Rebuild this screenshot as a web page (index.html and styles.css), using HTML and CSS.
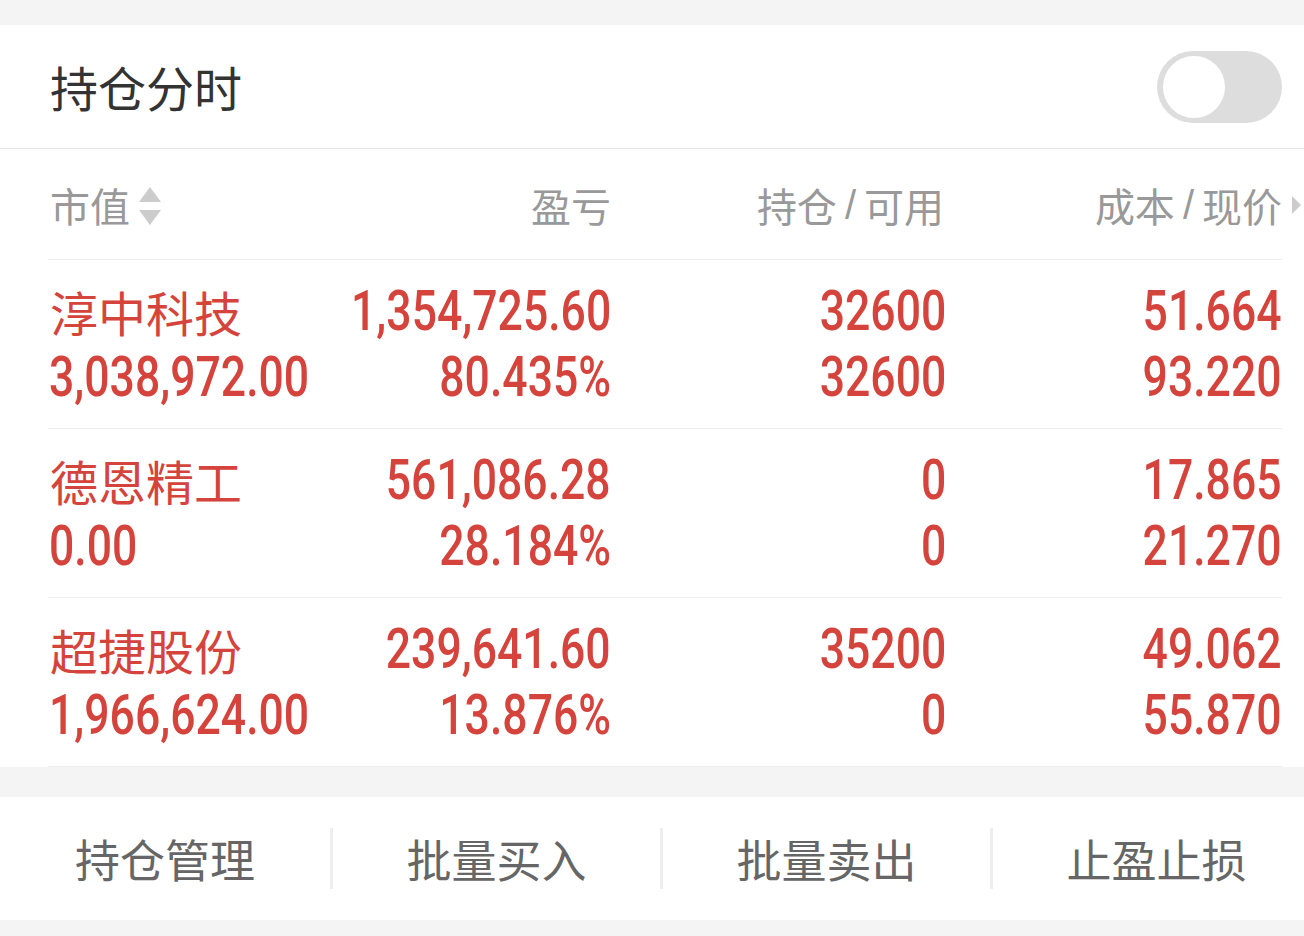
FILE: index.html
```html
<!DOCTYPE html>
<html lang="zh-CN">
<head>
<meta charset="utf-8">
<title>持仓分时</title>
<link rel="stylesheet" href="styles.css">
</head>
<body>
<div class="top-gap"></div>
<section class="panel">
  <div class="panel-head">
    <h1 class="title">持仓分时</h1>
    <div class="toggle"><div class="knob"></div></div>
  </div>
  <div class="table">
    <div class="row head">
      <div class="cell c1">市值
        <svg class="sort" width="22" height="38" viewBox="0 0 22 38"><polygon points="11,0 22,15 0,15" fill="#cccccc"/><polygon points="0,23 22,23 11,38" fill="#cccccc"/></svg>
      </div>
      <div class="cell c2">盈亏</div>
      <div class="cell c3">持仓<span class="sl">/</span>可用</div>
      <div class="cell c4">成本<span class="sl">/</span>现价
        <svg class="more" width="9" height="18" viewBox="0 0 9 18"><polygon points="0,0 9,9 0,18" fill="#cccccc"/></svg>
      </div>
    </div>
    <div class="row data">
      <div class="cell c1"><span class="name">淳中科技</span><span class="num">3,038,972.00</span></div>
      <div class="cell c2"><span class="num">1,354,725.60</span><span class="num">80.435%</span></div>
      <div class="cell c3"><span class="num">32600</span><span class="num">32600</span></div>
      <div class="cell c4"><span class="num">51.664</span><span class="num">93.220</span></div>
    </div>
    <div class="row data">
      <div class="cell c1"><span class="name">德恩精工</span><span class="num">0.00</span></div>
      <div class="cell c2"><span class="num">561,086.28</span><span class="num">28.184%</span></div>
      <div class="cell c3"><span class="num">0</span><span class="num">0</span></div>
      <div class="cell c4"><span class="num">17.865</span><span class="num">21.270</span></div>
    </div>
    <div class="row data">
      <div class="cell c1"><span class="name">超捷股份</span><span class="num">1,966,624.00</span></div>
      <div class="cell c2"><span class="num">239,641.60</span><span class="num">13.876%</span></div>
      <div class="cell c3"><span class="num">35200</span><span class="num">0</span></div>
      <div class="cell c4"><span class="num">49.062</span><span class="num">55.870</span></div>
    </div>
  </div>
</section>
<nav class="actions">
  <div class="act">持仓管理</div>
  <div class="act">批量买入</div>
  <div class="act">批量卖出</div>
  <div class="act">止盈止损</div>
</nav>
</body>
</html>
```
FILE: styles.css
```css
* { box-sizing: border-box; }
html, body { margin: 0; padding: 0; }
body {
  width: 1304px;
  height: 936px;
  overflow: hidden;
  background: #f4f4f4;
  font-family: "Noto Sans CJK SC", "Noto Sans", sans-serif;
}
.top-gap { height: 25px; }
.panel { background: #ffffff; }
.panel-head {
  height: 124px;
  display: flex;
  align-items: center;
  justify-content: space-between;
  padding: 0 22px 0 50px;
  border-bottom: 1px solid #e6e6e6;
}
.title {
  margin: 0;
  font-size: 48px;
  font-weight: 400;
  color: #333333;
  line-height: 1;
  padding-bottom: 2px;
}
.toggle {
  width: 125px;
  height: 72px;
  border-radius: 36px;
  background: #dddddd;
  padding: 5px 6px;
}
.knob {
  width: 62px;
  height: 62px;
  border-radius: 50%;
  background: #ffffff;
}
.table { padding: 0 22px 0 48px; }
.row {
  display: grid;
  grid-template-columns: 282px 281px 335px 1fr;
  border-bottom: 1px solid #eeeeee;
}
.row.head { height: 111px; }
.row.data { height: 169px; }
.cell {
  display: flex;
  align-items: center;
  justify-content: flex-end;
}
.head .cell {
  font-size: 40px;
  color: #999999;
  line-height: 1;
  padding-top: 2px;
}
.head .c1 { justify-content: flex-start; padding-left: 2px; }
.head .c3, .head .c4 { margin-right: 2px; }
.sl { margin: 0 8px; font-family: "Liberation Sans", sans-serif; }
.sort { margin-left: 9px; margin-top: 2px; }
.more { margin-left: 10px; margin-right: -21px; }
.data .cell {
  flex-direction: column;
  align-items: flex-end;
  justify-content: center;
  color: #d5443c;
}
.data .c1 { align-items: flex-start; padding-left: 2px; }
.name, .num {
  height: 66px;
  display: flex;
  align-items: center;
  line-height: 1;
}
.name { font-size: 48px; }
.num {
  font-family: Roboto, "Liberation Sans", sans-serif;
  font-size: 55px;
  font-weight: 500;
  transform: scaleX(0.81);
  transform-origin: right center;
}
.data .c1 .num { transform-origin: left center; margin-left: -1px; }
.actions {
  margin-top: 30px;
  height: 123px;
  background: #ffffff;
  display: grid;
  grid-template-columns: repeat(4, 330px);
  align-items: center;
  overflow: hidden;
}
.act {
  height: 61px;
  display: flex;
  align-items: center;
  justify-content: center;
  font-size: 45px;
  color: #666666;
}
.act + .act { border-left: 3px solid #eeeeee; }
```
